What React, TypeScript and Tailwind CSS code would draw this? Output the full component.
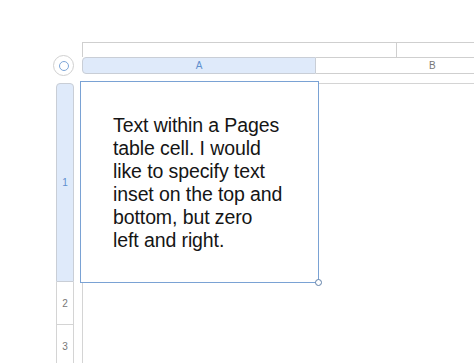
export default function App() {
  return (
    <div className="w-[474px] h-[363px] bg-white overflow-hidden pt-[42px] font-['Liberation_Sans',Arial,sans-serif]">
      {/* top strip */}
      <div className="flex h-[15px] ml-[82px]">
        <div className="w-[314px] border-t border-l border-[#cfcfcf]" />
        <div className="flex-1 border-t border-l border-[#cfcfcf]" />
      </div>

      {/* column headers */}
      <div className="flex h-[17px]">
        <div className="w-[82px] flex items-center">
          <div className="ml-[53px] w-[21px] h-[21px] rounded-full border-[1.5px] border-[#d0d0d0] bg-white flex items-center justify-center">
            <div className="w-[10px] h-[10px] rounded-full border-[1.5px] border-[#7ea6d8]" />
          </div>
        </div>
        <div className="w-[234px] h-[17px] bg-[#dfeafa] border border-[#c9ced6] rounded-l-[4px] flex items-center justify-center text-[10px] text-[#5f8fce]">
          A
        </div>
        <div className="flex-1 h-[17px] border-y border-[#cfcfcf] flex items-center pl-[113px] text-[10px] text-[#777]">
          B
        </div>
      </div>

      {/* body */}
      <div className="flex mt-[7px]">
        {/* row headers */}
        <div className="w-[80px] pt-[2px] pl-[56px] flex flex-col">
          <div className="w-[18px] h-[199px] bg-[#dfeafa] border border-[#c9ced6] rounded-t-[4px] flex items-center justify-center text-[10px] text-[#5f8fce]">
            1
          </div>
          <div className="w-[18px] h-[43px] border-x border-b border-[#d4d4d4] flex items-center justify-center text-[10px] text-[#777]">
            2
          </div>
          <div className="w-[18px] h-[43px] border-x border-[#d4d4d4] flex items-center justify-center text-[10px] text-[#777]">
            3
          </div>
        </div>

        {/* cells */}
        <div className="flex-1 flex flex-col">
          <div className="flex">
            <div className="relative w-[239px] h-[202px] border border-[#7aa2d4] pl-[32px] pt-[32px]">
              <p className="text-[19.5px] leading-[23px] text-[#151515] tracking-[-0.1px]">
                Text within a Pages<br />
                table cell. I would<br />
                like to specify text<br />
                inset on the top and<br />
                bottom, but zero<br />
                left and right.
              </p>
              <div className="absolute -right-[4px] -bottom-[4px] w-[7px] h-[7px] rounded-full border border-[#5f7fa8] bg-white" />
            </div>
            <div className="flex-1 mt-[2px] border-t border-[#d4d4d4]" />
          </div>
          <div className="ml-[2px] h-[90px] border-l border-[#d4d4d4]" />
        </div>
      </div>
    </div>
  );
}
